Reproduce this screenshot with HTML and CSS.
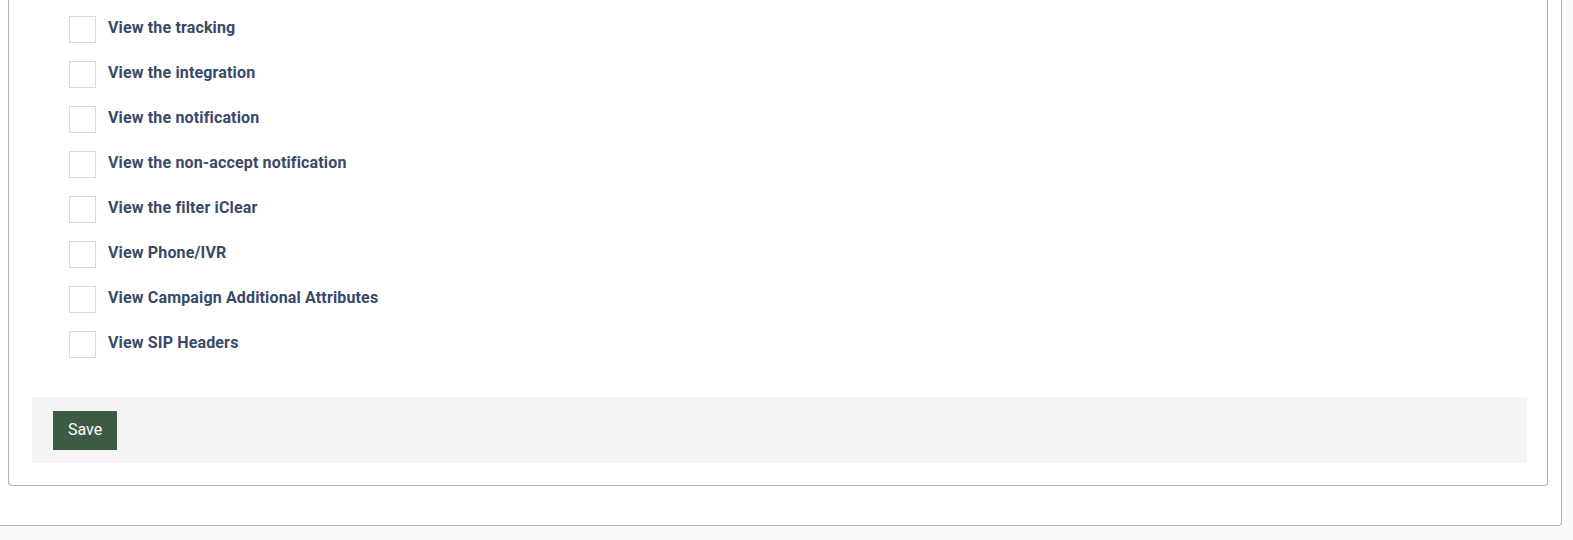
FILE: index.html
```html
<!DOCTYPE html>
<html lang="en">
<head>
<meta charset="UTF-8" />
<meta name="viewport" content="width=device-width, initial-scale=1.0"/>
<title>Permissions</title>
<link rel="stylesheet" href="styles.css">
</head>
<body>
<div class="panel">
  <div class="card">
    <!-- permission list -->
    <ul class="perm-list">
      <li class="perm"><span class="check"></span><span class="perm-label">View the tracking</span></li>
      <li class="perm"><span class="check"></span><span class="perm-label">View the integration</span></li>
      <li class="perm"><span class="check"></span><span class="perm-label">View the notification</span></li>
      <li class="perm"><span class="check"></span><span class="perm-label">View the non-accept notification</span></li>
      <li class="perm"><span class="check"></span><span class="perm-label">View the filter iClear</span></li>
      <li class="perm"><span class="check"></span><span class="perm-label">View Phone/IVR</span></li>
      <li class="perm"><span class="check"></span><span class="perm-label">View Campaign Additional Attributes</span></li>
      <li class="perm"><span class="check"></span><span class="perm-label">View SIP Headers</span></li>
    </ul>

    <div class="card-footer">
      <button class="btn-save">Save</button>
    </div>
  </div>
</div>
</body>
</html>
```

FILE: styles.css
```css
html, body {
  margin: 0;
  padding: 0;
  height: 100%;
  background: #fafafa;
  font-family: Roboto, "Liberation Sans", sans-serif;
  overflow: hidden;
}

.panel {
  box-sizing: border-box;
  width: 1568px;
  margin-left: -6px;
  padding: 0 13px 39px 13px;
  background: #fff;
  border: 1px solid #b3b3b3;
  border-top: none;
  border-radius: 0 0 4px 4px;
}

.card {
  padding: 0 20px 22px 23px;
  border: 1px solid #b3b3b3;
  border-top: none;
  border-radius: 0 0 4px 4px;
  background: #fff;
}

.perm-list {
  list-style: none;
  margin: 0;
  padding: 16px 0 21px 37px;
}

.perm {
  display: flex;
  align-items: flex-start;
  gap: 12px;
  height: 27px;
  margin-bottom: 18px;
}

.check {
  box-sizing: border-box;
  width: 27px;
  height: 27px;
  border: 1px solid #dcdad5;
  background: #fff;
}

.perm-label {
  font-size: 16px;
  line-height: 23px;
  font-weight: 700;
  letter-spacing: 0.15px;
  color: #384a68;
}

.card-footer {
  background: #f5f5f5;
  padding: 14px 21px 13px 21px;
}

.btn-save {
  display: block;
  height: 39px;
  width: 64px;
  padding: 0 0 2px 0;
  border: none;
  background: #3d5a45;
  color: #fff;
  font-family: Roboto, "Liberation Sans", sans-serif;
  font-size: 16px;
  cursor: pointer;
}
```
